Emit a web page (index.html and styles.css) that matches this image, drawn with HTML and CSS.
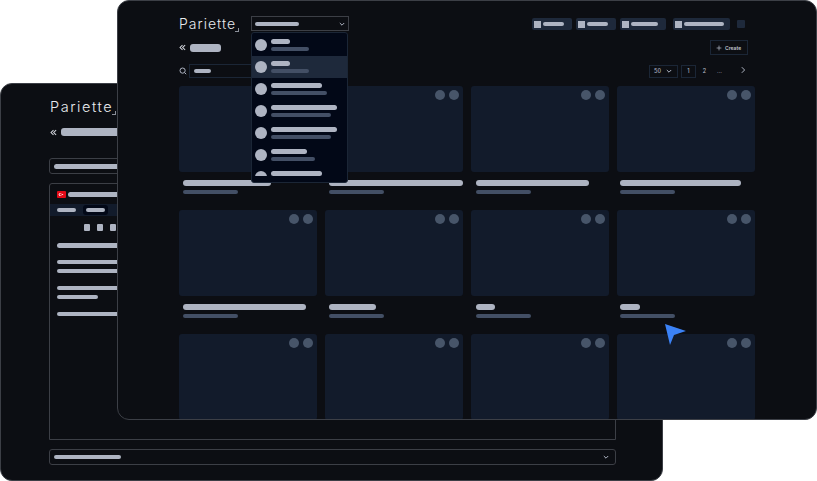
FILE: index.html
```html
<!DOCTYPE html>
<html lang="tr">
<head>
  <meta charset="UTF-8" />
  <meta name="viewport" content="width=device-width, initial-scale=1.0"/>
  <title>Pariette</title>
  <link rel="stylesheet" href="styles.css">
</head>
<body>
  <section class="window window-back">
    <div class="logo">Pariette<span class="logo-mark"></span></div>
    <div class="back-row">
      <svg class="back-icon" viewBox="0 0 8 8"><path d="M4 1.2 1.2 4 4 6.8M7 1.2 4.2 4 7 6.8"/></svg>
      <span class="bar light w80 tall"></span>
    </div>
    <div class="field"><span class="bar light w67"></span></div>
    <div class="panel">
      <div class="panel-title">
        <svg class="flag" viewBox="0 0 9 7"><rect width="9" height="7" fill="#e30a17"/><circle cx="3.2" cy="3.5" r="1.5" fill="#fff"/><circle cx="3.6" cy="3.5" r="1.1" fill="#e30a17"/><circle cx="5.6" cy="3.5" r=".6" fill="#fff"/></svg>
        <span class="bar light w90"></span>
      </div>
      <div class="tabs">
        <span class="tab"><span class="bar light w19 thin"></span></span>
        <span class="tab active"><span class="bar light w19 thin"></span></span>
        <span class="tab"><span class="bar light w19 thin"></span></span>
      </div>
      <div class="tools">
        <span class="tool"></span><span class="tool"></span><span class="tool"></span>
      </div>
      <div class="lines">
        <span class="bar light w90 lead"></span>
        <div class="line-group">
          <span class="bar light w90 thin"></span>
          <span class="bar light w90 thin"></span>
        </div>
        <div class="line-group">
          <span class="bar light w90 thin"></span>
          <span class="bar light w41 thin"></span>
        </div>
        <span class="bar light w90 thin"></span>
      </div>
    </div>
    <div class="field field-bottom">
      <span class="bar light w67 thin"></span>
      <svg class="chev" viewBox="0 0 8 8"><path d="M1.8 3 4 5.2 6.2 3"/></svg>
    </div>
  </section>

  <section class="window window-front">
    <header class="topbar">
      <div class="logo logo-front">Pariette<span class="logo-mark"></span></div>
      <div class="select">
        <span class="bar light w44 thin"></span>
        <svg class="chev" viewBox="0 0 8 8"><path d="M1.8 3 4 5.2 6.2 3"/></svg>
      </div>
      <nav class="chips">
        <span class="chip w40c"><i></i><span class="bar light w21 thin"></span></span>
        <span class="chip w40c"><i></i><span class="bar light w21 thin"></span></span>
        <span class="chip w46c"><i></i><span class="bar light w27 thin"></span></span>
        <span class="chip w57c chip-far"><i></i><span class="bar light w40 thin"></span></span>
        <span class="chip-square"></span>
      </nav>
    </header>

    <div class="toolbar">
      <div class="back-row">
        <svg class="back-icon" viewBox="0 0 8 8"><path d="M4 1.2 1.2 4 4 6.8M7 1.2 4.2 4 7 6.8"/></svg>
        <span class="bar light w31 tall"></span>
      </div>
      <button class="create"><svg viewBox="0 0 8 8"><path d="M4 .8v6.4M.8 4h6.4"/></svg>Create</button>
    </div>

    <div class="filters">
      <svg class="search-icon" viewBox="0 0 8 8"><circle cx="3.6" cy="3.6" r="2.6"/><path d="M5.6 5.6 7.2 7.2"/></svg>
      <div class="search"><span class="bar light w17 thin"></span></div>
      <div class="pager">
        <span class="page-size">50<svg class="chev" viewBox="0 0 8 8"><path d="M1.8 3 4 5.2 6.2 3"/></svg></span>
        <span class="page current">1</span>
        <span class="page">2</span>
        <span class="page dots">...</span>
        <svg class="pager-next" viewBox="0 0 8 8"><path d="M2.8 1.2 5.6 4 2.8 6.8"/></svg>
      </div>
    </div>

    <div class="grid">
      <article class="card"><div class="thumb"><i></i><i></i></div><span class="bar light w88 mid"></span><span class="bar dim w55"></span></article>
      <article class="card"><div class="thumb"><i></i><i></i></div><span class="bar light w134 mid"></span><span class="bar dim w55"></span></article>
      <article class="card"><div class="thumb"><i></i><i></i></div><span class="bar light w113 mid"></span><span class="bar dim w55"></span></article>
      <article class="card"><div class="thumb"><i></i><i></i></div><span class="bar light w121 mid"></span><span class="bar dim w55"></span></article>

      <article class="card"><div class="thumb"><i></i><i></i></div><span class="bar light w123 mid"></span><span class="bar dim w55"></span></article>
      <article class="card"><div class="thumb"><i></i><i></i></div><span class="bar light w47 mid"></span><span class="bar dim w55"></span></article>
      <article class="card"><div class="thumb"><i></i><i></i></div><span class="bar light w19 mid"></span><span class="bar dim w55"></span></article>
      <article class="card"><div class="thumb"><i></i><i></i></div><span class="bar light w20 mid"></span><span class="bar dim w55"></span></article>

      <article class="card"><div class="thumb"><i></i><i></i></div></article>
      <article class="card"><div class="thumb"><i></i><i></i></div></article>
      <article class="card"><div class="thumb"><i></i><i></i></div></article>
      <article class="card"><div class="thumb"><i></i><i></i></div></article>
    </div>

    <div class="dropdown">
      <div class="options">
        <div class="option"><span class="avatar"></span><div><span class="bar light w19 opt1"></span><span class="bar dim w38"></span></div></div>
        <div class="option hover"><span class="avatar"></span><div><span class="bar light w19 opt1"></span><span class="bar dim w38"></span></div></div>
        <div class="option"><span class="avatar"></span><div><span class="bar light w51 opt1"></span><span class="bar dim w56"></span></div></div>
        <div class="option"><span class="avatar"></span><div><span class="bar light w66 opt1"></span><span class="bar dim w60"></span></div></div>
        <div class="option"><span class="avatar"></span><div><span class="bar light w66 opt1"></span><span class="bar dim w60"></span></div></div>
        <div class="option"><span class="avatar"></span><div><span class="bar light w36 opt1"></span><span class="bar dim w44"></span></div></div>
        <div class="option"><span class="avatar"></span><div><span class="bar light w51 opt1"></span><span class="bar dim w56"></span></div></div>
      </div>
    </div>
  </section>

  <svg class="pointer" viewBox="0 0 22 22"><path d="M0 0 21 7 9 11 5 21Z"/></svg>
</body>
</html>
```

FILE: styles.css
```css
:root {
  --window: #0c0e13;
  --line: #3c3f46;
  --navy-line: #1b2636;
  --thumb: #121b2b;
  --bar: #aeb4c2;
  --bar-dim: #434f65;
  --menu: #020817;
}
* { box-sizing: border-box; margin: 0; padding: 0; }
html, body { height: 100%; }
body {
  font-family: Inter, "Liberation Sans", sans-serif;
  background: #fff;
  overflow: hidden;
}
svg { display: block; fill: none; stroke: var(--bar); stroke-width: 1; }

/* windows sit on a free canvas */
.window {
  position: absolute;
  background: var(--window);
  border: 1px solid var(--line);
  border-radius: 12px;
  overflow: hidden;
}
.window-back {
  left: 0;
  top: 83px;
  width: 663px;
  height: 398px;
  padding: 15px 46px 0 48px;
}
.window-front {
  left: 117px;
  top: 0;
  width: 700px;
  height: 420px;
  padding: 15px 61px 0 61px;
}

/* placeholder bars */
.bar {
  display: block;
  height: 5px;
  border-radius: 3px;
  flex: none;
}
.bar.light { background: var(--bar); }
.bar.dim { background: var(--bar-dim); height: 4px; }
.bar.thin { height: 4px; }
.bar.mid { height: 6px; }
.bar.tall { height: 8px; }
.w17 { width: 17px; } .w19 { width: 19px; } .w20 { width: 20px; }
.w21 { width: 21px; } .w27 { width: 27px; } .w31 { width: 31px; }
.w36 { width: 36px; } .w38 { width: 38px; } .w40 { width: 40px; }
.w41 { width: 41px; } .w44 { width: 44px; } .w47 { width: 47px; }
.w51 { width: 51px; } .w55 { width: 55px; } .w56 { width: 56px; }
.w60 { width: 60px; } .w66 { width: 66px; } .w67 { width: 67px; }
.w80 { width: 80px; } .w88 { width: 88px; } .w90 { width: 90px; }
.w113 { width: 113px; } .w121 { width: 121px; } .w123 { width: 123px; }
.w134 { width: 134px; }

/* logo */
.logo {
  height: 16px;
  margin-left: 1px;
  font-size: 14.5px;
  line-height: 16px;
  font-weight: 300;
  letter-spacing: 1.55px;
  color: #e8eaee;
  white-space: nowrap;
}
.logo-mark {
  display: inline-block;
  width: 4px;
  height: 4px;
  margin-left: -1px;
  vertical-align: -3px;
  border-right: 1px solid #8b8f99;
  border-bottom: 1px solid #8b8f99;
}
.logo-front {
  flex: 0 0 72px;
  margin-left: 0;
  font-size: 14px;
  letter-spacing: 1px;
}

.back-row { display: flex; align-items: center; gap: 4px; }
.back-icon { width: 7px; height: 7px; stroke: #d3d6dd; stroke-width: 1.2; }

/* back window */
.window-back .back-row { margin: 13px 0 0 1px; height: 8px; }
.field {
  display: flex;
  align-items: center;
  justify-content: space-between;
  height: 16px;
  margin-top: 22px;
  padding: 0 5px 0 4px;
  border: 1px solid var(--line);
  border-radius: 3px;
}
.panel {
  height: 257px;
  margin-top: 9px;
  border: 1px solid var(--line);
  border-radius: 3px 3px 0 0;
}
.panel-title {
  display: flex;
  align-items: center;
  gap: 2px;
  height: 20px;
  padding-left: 7px;
}
.flag { width: 9px; height: 7px; stroke: none; border-radius: 1px; }
.tabs {
  display: flex;
  align-items: center;
  gap: 7px;
  height: 12px;
  padding-left: 7px;
  background: var(--thumb);
}
.tab.active {
  height: 10px;
  margin-right: 2px;
  padding: 3px;
  background: var(--menu);
  border-radius: 3px;
}
.tools {
  display: flex;
  gap: 7px;
  margin: 8px 0 0 34px;
}
.tool { width: 6px; height: 7px; background: var(--bar); border-radius: 1px; }
.lines {
  display: flex;
  flex-direction: column;
  gap: 13px;
  margin: 12px 0 0 7px;
}
.lines .lead { margin-bottom: -1px; }
.line-group { display: flex; flex-direction: column; gap: 5px; }
.field-bottom { margin-top: 9px; }

/* chevrons */
.chev { width: 8px; height: 8px; flex: none; }

/* top bar */
.topbar { display: flex; align-items: flex-start; height: 16px; }
.select {
  display: flex;
  align-items: center;
  justify-content: space-between;
  width: 98px;
  height: 15px;
  padding: 0 0 0 3px;
  border: 1px solid var(--line);
}
.select .chev { margin-right: 2px; }
.chips {
  display: flex;
  align-items: center;
  gap: 4px;
  margin: 2px 10px 0 auto;
  height: 12px;
}
.chip {
  display: flex;
  align-items: center;
  gap: 2px;
  height: 12px;
  padding-left: 2px;
  background: #1e293b;
  border-radius: 2px;
}
.chip i { width: 7px; height: 7px; background: var(--bar); }
.w40c { width: 40px; }
.w46c { width: 46px; }
.w57c { width: 57px; }
.chip-far { margin-left: 3px; }
.chip-square {
  width: 8px;
  height: 8px;
  margin-left: 3px;
  background: #1e293b;
  border-radius: 1px;
}

/* toolbar */
.toolbar {
  display: flex;
  align-items: center;
  justify-content: space-between;
  height: 15px;
  margin-top: 8px;
  padding-right: 7px;
}
.create {
  display: flex;
  align-items: center;
  gap: 3px;
  width: 38px;
  height: 15px;
  padding-left: 5px;
  font: 600 5px Inter, "Liberation Sans", sans-serif;
  color: #c3c7d0;
  background: none;
  border: 1px solid var(--navy-line);
}
.create svg { width: 6px; height: 6px; }

/* search + pagination */
.filters { display: flex; align-items: center; height: 14px; margin-top: 9px; }
.search-icon { width: 8px; height: 8px; flex: none; }
.search {
  display: flex;
  align-items: center;
  width: 120px;
  height: 14px;
  margin-left: 2px;
  padding-left: 4px;
  border: 1px solid var(--navy-line);
}
.pager {
  display: flex;
  align-items: center;
  margin-left: auto;
  padding-right: 8px;
  font-size: 5.5px;
  font-weight: 500;
  color: var(--bar);
}
.page-size {
  display: flex;
  align-items: center;
  justify-content: space-between;
  width: 29px;
  height: 13px;
  padding: 0 4px;
  border: 1px solid var(--navy-line);
}
.page {
  display: flex;
  align-items: center;
  justify-content: center;
  width: 15px;
  height: 13px;
  margin-left: 1px;
}
.page.current { margin-left: 3px; border: 1px solid var(--navy-line); }
.page.dots { margin-left: 0; }
.pager-next { width: 8px; height: 8px; margin: 0 0 2px 12px; }

/* cards */
.grid {
  display: grid;
  grid-template-columns: repeat(4, 138px);
  gap: 16px 8px;
  margin-top: 8px;
}
.card { height: 108px; }
.card .bar { margin-left: 4px; }
.card:nth-child(4n+3) .bar { margin-left: 5px; }
.card:nth-child(4n) .bar { margin-left: 3px; }
.card .bar.dim { margin-top: 4px; }
.thumb {
  display: flex;
  justify-content: flex-end;
  gap: 4px;
  height: 86px;
  margin-bottom: 8px;
  padding: 4px 4px 0 0;
  background: var(--thumb);
  border-radius: 3px;
}
.thumb i { width: 10px; height: 10px; border-radius: 50%; background: #475569; }

/* open dropdown over the page */
.dropdown {
  position: absolute;
  left: 133px;
  top: 31px;
  width: 97px;
  height: 151px;
  padding-top: 1px;
  background: var(--menu);
  border: 1px solid var(--navy-line);
  border-radius: 3px;
}
.options { height: 142px; overflow: hidden; }
.option {
  display: flex;
  align-items: center;
  gap: 4px;
  height: 22px;
  padding-left: 3px;
}
.option.hover { background: #1e293b; }
.option .bar.opt1 { margin-bottom: 3px; }
.avatar {
  width: 12px;
  height: 12px;
  border-radius: 50%;
  background: var(--bar);
  flex: none;
}

/* blue pointer */
.pointer {
  position: absolute;
  left: 665px;
  top: 324px;
  width: 22px;
  height: 22px;
  stroke: none;
}
.pointer path { fill: #3b82f6; }
```
